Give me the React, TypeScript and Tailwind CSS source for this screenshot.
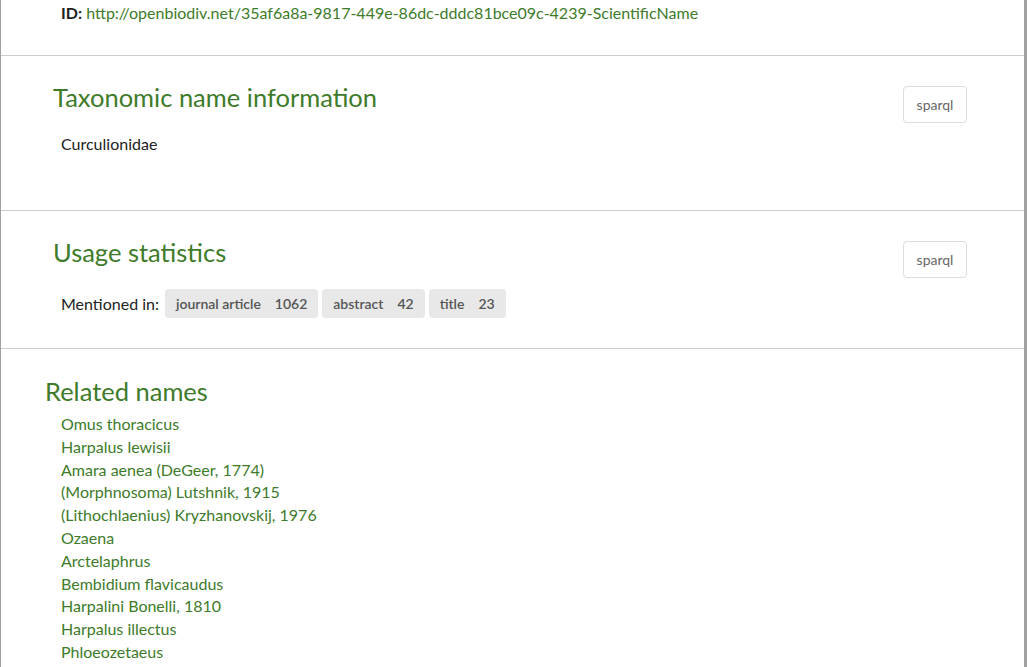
import React from 'react';

const related = [
  'Omus thoracicus',
  'Harpalus lewisii',
  'Amara aenea (DeGeer, 1774)',
  '(Morphnosoma) Lutshnik, 1915',
  '(Lithochlaenius) Kryzhanovskij, 1976',
  'Ozaena',
  'Arctelaphrus',
  'Bembidium flavicaudus',
  'Harpalini Bonelli, 1810',
  'Harpalus illectus',
  'Phloeozetaeus',
];

const mentions = [
  { label: 'journal article', count: 1062 },
  { label: 'abstract', count: 42 },
  { label: 'title', count: 23 },
];

function SparqlButton() {
  return (
    <button className="h-[37px] w-[64px] shrink-0 rounded-[4px] border border-[#dddddd] bg-white text-[14px] text-[#666666]">
      sparql
    </button>
  );
}

export default function App() {
  return (
    <div
      className="h-[667px] w-[1027px] overflow-hidden bg-white text-[16px] text-[#222222]"
      style={{ fontFamily: 'Lato, "Open Sans", sans-serif' }}
    >
      <div className="h-full w-[1027px] border-l border-r-[3px] border-[#a0a0a0]">
        {/* id */}
        <div className="h-[56px] border-b border-[#cccccc] pl-[60px] pt-[2px] leading-[22px]">
          <span className="font-bold">ID:</span>{' '}
          <a className="text-[#3e7b2a]">http://openbiodiv.net/35af6a8a-9817-449e-86dc-dddc81bce09c-4239-ScientificName</a>
        </div>

        {/* taxonomic name */}
        <div className="h-[155px] border-b border-[#cccccc] pl-[52px] pr-[57px] pt-[30px]">
          <div className="flex items-start justify-between">
            <h2 className="-mt-[2px] text-[25.5px] leading-[26px] text-[#3e7b2a]">Taxonomic name information</h2>
            <SparqlButton />
          </div>
          <div className="mt-[10px] pl-[8px] leading-[22px]">Curculionidae</div>
        </div>

        {/* usage */}
        <div className="h-[138px] border-b border-[#cccccc] pl-[52px] pr-[57px] pt-[30px]">
          <div className="flex items-start justify-between">
            <h2 className="-mt-[2px] text-[25.5px] leading-[26px] text-[#3e7b2a]">Usage statistics</h2>
            <SparqlButton />
          </div>
          <div className="mt-[11px] flex items-center gap-[4px] pl-[8px]">
            <span className="mr-[2px]">Mentioned in:</span>
            {mentions.map((m) => (
              <span
                key={m.label}
                className="flex h-[29px] items-center gap-[14px] rounded-[4px] bg-[#e8e8e8] px-[11px] text-[14px] font-semibold text-[#555555]"
              >
                <span>{m.label}</span>
                <span>{m.count}</span>
              </span>
            ))}
          </div>
        </div>

        {/* related */}
        <div className="pl-[44px] pt-[29px]">
          <h2 className="text-[25.5px] leading-[26px] text-[#3e7b2a]">Related names</h2>
          <ul className="mt-[9px] pl-[16px] leading-[22.8px] text-[#3e7b2a]">
            {related.map((r) => (
              <li key={r}>{r}</li>
            ))}
          </ul>
        </div>
      </div>
    </div>
  );
}
